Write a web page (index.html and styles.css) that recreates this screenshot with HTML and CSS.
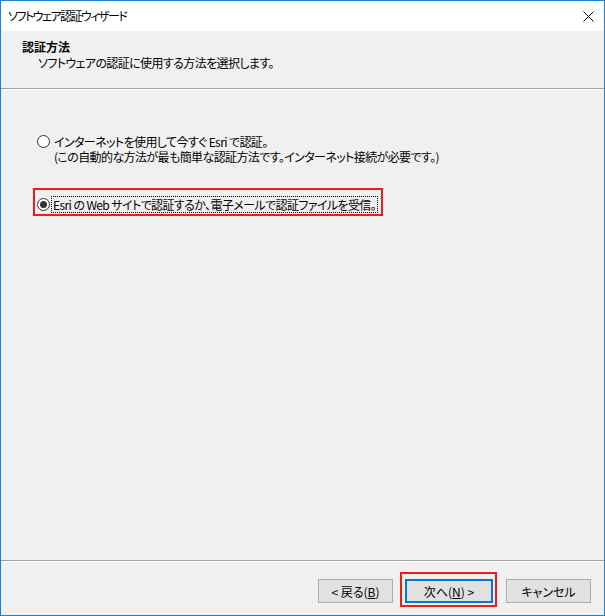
FILE: index.html
```html
<!DOCTYPE html>
<html lang="ja">
<head>
<meta charset="utf-8">
<title>ソフトウェア認証ウィザード</title>
<link rel="stylesheet" href="styles.css">
</head>
<body>
<div class="window">
  <div class="titlebar">
    <span class="title">ソフトウェア認証ウィザード</span>
    <svg class="close" width="11" height="11" viewBox="0 0 11 11"><path d="M0.5 0.5 L10.5 10.5 M10.5 0.5 L0.5 10.5" stroke="#000" stroke-width="1" fill="none"/></svg>
  </div>
  <div class="header">
    <div class="h-title">認証方法</div>
    <div class="h-sub">ソフトウェアの認証に使用する方法を選択します。</div>
  </div>
  <div class="sep"></div>
  <div class="content">
    <div class="option opt1">
      <span class="radio"></span>
      <div class="label">
        <div class="line">インターネットを使用して今すぐ Esri で認証。</div>
        <div class="line">(この自動的な方法が最も簡単な認証方法です。インターネット接続が必要です。)</div>
      </div>
    </div>
    <div class="highlight">
      <div class="option opt2">
        <span class="radio checked"></span>
        <span class="label focus">Esri の Web サイトで認証するか、電子メールで認証ファイルを受信。</span>
      </div>
    </div>
  </div>
  <div class="sep"></div>
  <div class="footer">
    <button class="btn btn-back">&lt; 戻る(<u>B</u>)</button>
    <div class="next-wrap">
      <button class="btn btn-next">次へ(<u>N</u>) &gt;</button>
    </div>
    <button class="btn btn-cancel">キャンセル</button>
  </div>
</div>
</body>
</html>
```

FILE: styles.css
```css
* {
  box-sizing: border-box;
}

html, body {
  margin: 0;
  padding: 0;
  background: #f0f0f0;
}

body {
  font-family: "Noto Sans CJK JP", "Noto Sans", sans-serif;
  font-size: 12px;
  color: #000;
  font-feature-settings: "palt";
  letter-spacing: -0.6px;
}

.window {
  width: 605px;
  height: 616px;
  border: 1px solid #1883d7;
  background: #f0f0f0;
  display: flex;
  flex-direction: column;
}

.titlebar {
  height: 30px;
  flex: none;
  background: #fff;
  display: flex;
  align-items: center;
  justify-content: space-between;
  padding: 0 10px 0 7px;
}

.title {
  font-size: 12px;
  line-height: 16px;
  letter-spacing: -1.5px;
}

.close {
  display: block;
}

.header {
  height: 57px;
  flex: none;
  padding: 8px 0 0 21px;
}

.h-title {
  font-weight: bold;
  line-height: 16px;
  letter-spacing: 0;
}

.h-sub {
  line-height: 16px;
  padding-left: 16px;
}

.sep {
  flex: none;
  height: 2px;
  border-top: 1px solid #a0a0a0;
  border-bottom: 1px solid #fff;
}

.content {
  flex: 1;
  padding: 44px 0 0 32px;
}

.option {
  display: flex;
  align-items: flex-start;
}

.opt1 {
  padding-left: 4px;
}

.label {
  white-space: nowrap;
}

.line {
  height: 15px;
  line-height: 15px;
}

.radio {
  flex: none;
  width: 13px;
  height: 13px;
  border: 1px solid #333;
  border-radius: 50%;
  background: #fff;
  margin: 1px 4px 0 0;
  position: relative;
}

.radio.checked::after {
  content: "";
  position: absolute;
  left: 2px;
  top: 2px;
  width: 7px;
  height: 7px;
  border-radius: 50%;
  background: #333;
}

.highlight {
  margin-top: 24px;
  width: 350px;
  height: 28px;
  border: 2px solid #f01a1a;
  padding: 4px 0 0 2px;
}

.opt2 {
  align-items: center;
  height: 20px;
}

.opt2 .radio {
  margin: 0 2px 0 0;
}

.focus {
  outline: 1px dotted #000;
  padding: 0 1px;
  line-height: 15px;
}

.footer {
  flex: none;
  height: 53px;
  display: flex;
  justify-content: flex-end;
  align-items: flex-start;
  padding: 17px 13px 0 0;
}

.btn {
  font-family: "Noto Sans CJK JP", "Noto Sans", sans-serif;
  font-feature-settings: "palt";
  font-size: 12px;
  letter-spacing: 0;
  color: #000;
  height: 24px;
  background: #e1e1e1;
  border: 1px solid #adadad;
  padding: 0;
  margin: 0;
}

.btn-back {
  width: 75px;
  margin-right: 7px;
}

.next-wrap {
  margin-top: -7px;
  border: 2px solid #f01a1a;
  padding: 5px 2px 2px 3px;
  margin-right: 9px;
}

.btn-next {
  display: block;
  width: 88px;
  border: 2px solid #0078d7;
}

.btn-cancel {
  width: 85px;
}
```
